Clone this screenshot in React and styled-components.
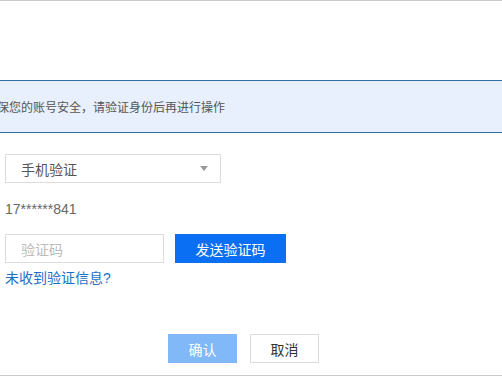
import React from 'react'
import styled, { createGlobalStyle } from 'styled-components'

const GlobalStyle = createGlobalStyle`
  html, body { margin: 0; padding: 0; background: #fff; }
  body {
    font-family: "Liberation Sans", "Noto Sans CJK SC", sans-serif;
    overflow: hidden;
  }
`

const Panel = styled.div`
  width: 502px;
  height: 376px;
  box-sizing: border-box;
  border-top: 1px solid #c9c9c9;
  border-bottom: 1px solid #c9c9c9;
  overflow: hidden;
  padding-top: 79px;
`

const Notice = styled.div`
  height: 53px;
  box-sizing: border-box;
  border-top: 1px solid #2f6fa6;
  border-bottom: 1px solid #2f6fa6;
  background: #e7f0fc;
  color: #555;
  font-size: 12px;
  display: flex;
  align-items: center;
  white-space: nowrap;
  text-indent: -39px;
`

const Form = styled.div`
  padding: 21px 0 0 5px;
  display: flex;
  flex-direction: column;
  align-items: flex-start;
`

const Select = styled.div`
  width: 216px;
  height: 29px;
  box-sizing: border-box;
  border: 1px solid #dcdcdc;
  display: flex;
  align-items: center;
  justify-content: space-between;
  padding: 0 12px 0 15px;
  font-size: 14px;
  color: #555;
`

const Caret = styled.span`
  width: 0;
  height: 0;
  border-left: 4px solid transparent;
  border-right: 4px solid transparent;
  border-top: 5px solid #999;
`

const Phone = styled.div`
  margin-top: 18px;
  font-size: 14px;
  color: #666;
  line-height: 17px;
`

const CodeRow = styled.div`
  margin-top: 16px;
  display: flex;
  gap: 11px;
`

const CodeInput = styled.div`
  width: 159px;
  height: 29px;
  box-sizing: border-box;
  border: 1px solid #dcdcdc;
  display: flex;
  align-items: center;
  padding-left: 15px;
  font-size: 14px;
  color: #bbb;
`

const Button = styled.div`
  width: ${p => p.$w}px;
  height: 29px;
  box-sizing: border-box;
  display: flex;
  align-items: center;
  justify-content: center;
  font-size: 14px;
  background: ${p => p.$bg};
  color: ${p => p.$color};
  border: 1px solid ${p => p.$border || p.$bg};
`

const Link = styled.div`
  margin-top: 6px;
  font-size: 14px;
  color: #1d6fc4;
  line-height: 18px;
`

const Footer = styled.div`
  margin-top: 47px;
  padding-left: 168px;
  display: flex;
  gap: 13px;
`

export default function App() {
  return (
    <>
      <GlobalStyle />
      <Panel>
        <Notice>为了确保您的账号安全，请验证身份后再进行操作</Notice>
        <Form>
          <Select>
            <span>手机验证</span>
            <Caret />
          </Select>
          <Phone>17******841</Phone>
          <CodeRow>
            <CodeInput>验证码</CodeInput>
            <Button $w={111} $bg="#0b6ff4" $color="#fff">发送验证码</Button>
          </CodeRow>
          <Link>未收到验证信息?</Link>
        </Form>
        <Footer>
          <Button $w={69} $bg="#80b8f8" $color="#fff">确认</Button>
          <Button $w={69} $bg="#fff" $color="#333" $border="#dcdcdc">取消</Button>
        </Footer>
      </Panel>
    </>
  )
}
